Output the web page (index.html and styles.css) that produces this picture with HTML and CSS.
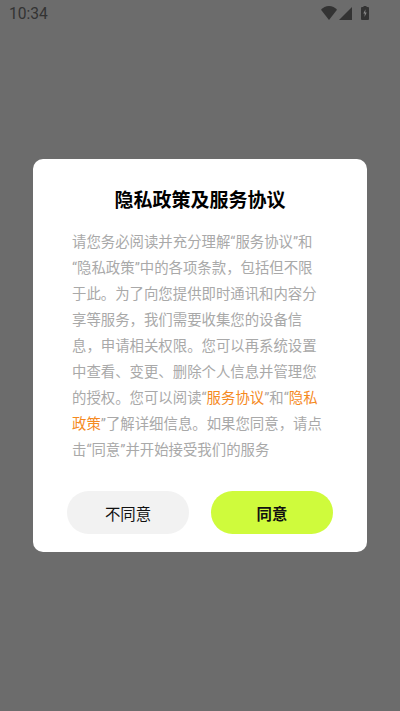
FILE: index.html
```html
<!DOCTYPE html>
<html lang="zh-CN">
<head>
<meta charset="utf-8">
<title>隐私政策及服务协议</title>
<link rel="stylesheet" href="styles.css">
</head>
<body>
<div class="screen">
  <div class="status">
    <span class="time">10:34</span>
    <div class="status-icons">
      <svg class="wifi" viewBox="0 0 16 14"><path d="M0 3.800C2 1.500 4.800 0 8 0s6 1.500 8 3.800L8 14z"/></svg>
      <svg class="signal" viewBox="0 0 13 13"><path d="M13 0v13H0z"/></svg>
      <svg class="battery" viewBox="0 0 8 14"><path d="M2.500 0h3v1h1.500a1 1 0 0 1 1 1v11a1 1 0 0 1-1 1H1a1 1 0 0 1-1-1V2a1 1 0 0 1 1-1h1.500z"/><path class="bolt" d="M4.500 3.200 2.300 7.500h1.500L3.500 11l2.200-4.500H4.200z"/></svg>
    </div>
  </div>
  <main class="stage">
    <section class="dialog">
      <h1 class="title">隐私政策及服务协议</h1>
      <p class="body">请您务必阅读并充分理解“服务协议”和<br>“隐私政策”中的各项条款，包括但不限<br>于此。为了向您提供即时通讯和内容分<br>享等服务，我们需要收集您的设备信<br>息，申请相关权限。您可以再系统设置<br>中查看、变更、删除个人信息并管理您<br>的授权。您可以阅读“<span class="link">服务协议</span>”和“<span class="link">隐私<br>政策</span>”了解详细信息。如果您同意，请点<br>击“同意”并开始接受我们的服务</p>
      <div class="actions">
        <button class="btn btn-no">不同意</button>
        <button class="btn btn-yes">同意</button>
      </div>
    </section>
  </main>
</div>
</body>
</html>
```
FILE: styles.css
```css
* { box-sizing: border-box; }
html, body { margin: 0; height: 100%; }
body { font-family: Roboto, "Noto Sans CJK SC", sans-serif; }
.screen {
  width: 400px;
  height: 711px;
  background: #6c6c6c;
  display: flex;
  flex-direction: column;
  overflow: hidden;
}
.status {
  height: 28px;
  flex: none;
  display: flex;
  align-items: flex-start;
  justify-content: space-between;
  padding: 6px 31px 0 9px;
  color: #333;
}
.time { font-size: 15.6px; line-height: 1; margin-top: 1px; }
.status-icons { display: flex; align-items: flex-end; gap: 2px; }
.status-icons svg { display: block; fill: #333; }
.wifi { width: 16px; height: 14px; }
.signal { width: 13px; height: 13px; margin-right: 7px; }
.battery { width: 8px; height: 14px; }
.battery .bolt { fill: #8a8a8a; }
.stage { flex: 1; display: flex; justify-content: center; padding-top: 131px; }
.dialog {
  width: 334px;
  height: 393px;
  background: #fff;
  border-radius: 10px;
  padding: 29px 34px 0;
}
.title {
  margin: 0;
  font-size: 19px;
  line-height: 26px;
  font-weight: 700;
  text-align: center;
  color: #000;
}
.body {
  margin: 16px 0 0;
  padding-left: 5px;
  font-size: 14.4px;
  line-height: 26px;
  color: #a9a9a9;
  white-space: nowrap;
}
.link { color: #f58a1f; }
.actions { display: flex; justify-content: space-between; margin-top: 27px; }
.btn {
  width: 122px;
  height: 43px;
  border: 0;
  border-radius: 22px;
  font-family: inherit;
  font-size: 15.4px;
  color: #111;
  padding: 0;
}
.btn-no { background: #f2f2f2; font-weight: 400; }
.btn-yes { background: #cffb3c; font-weight: 700; }
```
